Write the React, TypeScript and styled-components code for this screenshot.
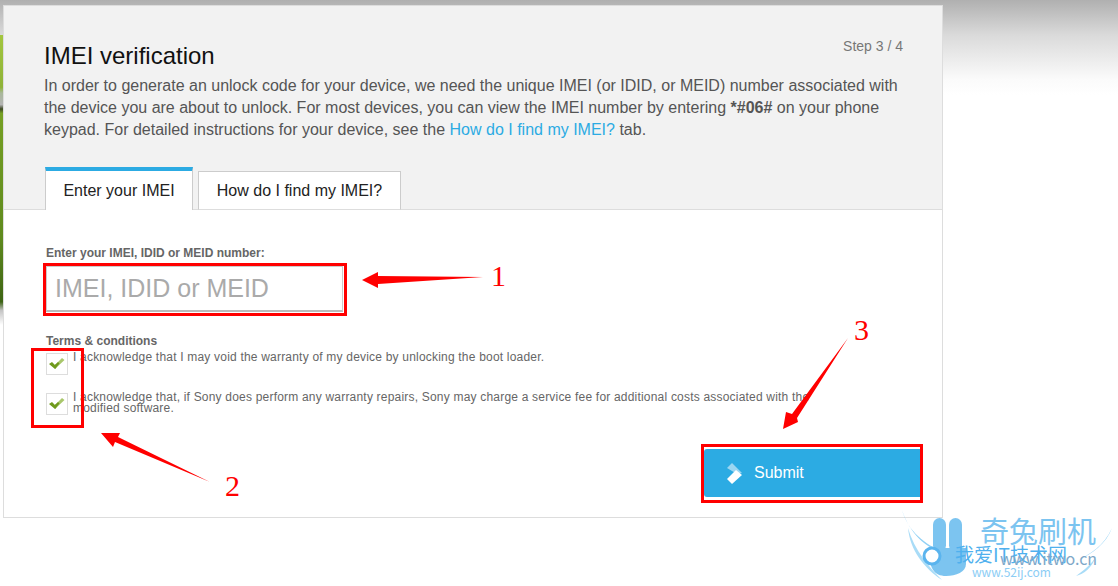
import styled, { createGlobalStyle } from "styled-components";

const GlobalStyle = createGlobalStyle`
  html, body {
    margin: 0;
    padding: 0;
    background: #fff;
    overflow: hidden;
  }
  * {
    box-sizing: border-box;
  }
`;

const Page = styled.div`
  position: relative;
  width: 1118px;
  height: 586px;
  padding: 5px 0 0 3px;
  font-family: "Liberation Sans", Arial, sans-serif;
  background:
    linear-gradient(
        180deg,
        #a3c63f 0,
        #8fb338 18%,
        #a9b89a 20%,
        #b4b4b4 24%,
        #3f4a25 25.5%,
        #76a024 27%,
        #5f8a1e 70%,
        #3d6414 92%,
        #c4c4c4 95%,
        #ffffff 100%
      )
      0 35px / 3px 290px no-repeat,
    linear-gradient(180deg, #b0b0b0 0, #dadada 35px, #fbfbfb 80px, #fff 95px) 0 0 / 100% 100px no-repeat;
`;

const Card = styled.div`
  width: 940px;
  border: 1px solid #ddd;
  background: #fff;
`;

const Header = styled.header`
  background: #f2f2f2;
  border-bottom: 1px solid #ddd;
  padding: 32px 39px 0 40px;
`;

const TitleRow = styled.div`
  display: flex;
  justify-content: space-between;
  align-items: flex-start;
`;

const Title = styled.h1`
  margin: 4px 0 0;
  font-size: 24px;
  line-height: 28px;
  font-weight: normal;
  color: #111;
`;

const Step = styled.span`
  font-size: 14px;
  line-height: 16px;
  color: #777;
`;

const Intro = styled.p`
  margin: 5px 0 0;
  font-size: 16px;
  line-height: 22px;
  color: #555;
`;

const Link = styled.a`
  color: #2cabe3;
`;

const Tabs = styled.div`
  display: flex;
  align-items: flex-end;
  gap: 5px;
  margin: 26px 0 -1px 1px;
`;

const Tab = styled.div<{ $active?: boolean }>`
  display: flex;
  align-items: center;
  justify-content: center;
  background: #fff;
  font-size: 16px;
  color: #222;
  border: 1px solid #ccc;
  border-bottom: ${(p) => (p.$active ? "none" : "1px solid #ddd")};
  border-top: ${(p) => (p.$active ? "4px solid #2cabe3" : "1px solid #ccc")};
  width: ${(p) => (p.$active ? "148px" : "203px")};
  height: ${(p) => (p.$active ? "43px" : "39px")};
  padding-top: ${(p) => (p.$active ? "1px" : "0")};
`;

const Form = styled.form`
  padding: 36px 22px 20px 42px;
`;

const FieldLabel = styled.label`
  display: block;
  font-size: 12px;
  line-height: 14px;
  font-weight: bold;
  color: #666;
`;

const ImeiInput = styled.input`
  display: block;
  width: 297px;
  height: 46px;
  margin-top: 6px;
  padding: 0 8px;
  border: 1px solid #ccc;
  border-bottom: 2px solid #bbb;
  background: #fff;
  font-family: inherit;
  font-size: 25px;
  color: #555;

  &::placeholder {
    color: #aaa;
    opacity: 1;
  }
`;

const TermsLabel = styled(FieldLabel)`
  margin-top: 22px;
`;

const Term = styled.div<{ $gap: number }>`
  display: flex;
  gap: 5px;
  margin-top: ${(p) => p.$gap}px;
`;

const CheckBox = styled.span`
  display: flex;
  flex: none;
  align-items: center;
  justify-content: center;
  width: 22px;
  height: 22px;
  margin-top: 1px;
  border: 1px solid #ddd;
  background: #fff;
`;

const TermText = styled.span`
  width: 752px;
  font-size: 12px;
  line-height: 11px;
  letter-spacing: 0.2px;
  color: #666;
`;

const Actions = styled.div`
  display: flex;
  justify-content: flex-end;
  margin-top: 34px;
`;

const SubmitButton = styled.button`
  display: flex;
  align-items: center;
  gap: 12px;
  width: 216px;
  height: 48px;
  padding: 0 0 0 23px;
  border: none;
  border-radius: 3px 0 0 3px;
  background: #2cabe3;
  color: #fff;
  font-family: inherit;
  font-size: 16px;
`;

const RedBox = styled.div<{ $x: number; $y: number; $w: number; $h: number }>`
  position: absolute;
  left: ${(p) => p.$x}px;
  top: ${(p) => p.$y}px;
  width: ${(p) => p.$w}px;
  height: ${(p) => p.$h}px;
  border: 3px solid #f00;
`;

const ArrowLayer = styled.svg`
  position: absolute;
  left: 0;
  top: 0;
  pointer-events: none;
`;

const Marker = styled.span<{ $x: number; $y: number }>`
  position: absolute;
  left: ${(p) => p.$x}px;
  top: ${(p) => p.$y}px;
  font-family: "Liberation Serif", serif;
  font-size: 30px;
  line-height: 30px;
  color: #f00;
`;

const Watermark = styled.div`
  position: absolute;
  left: 900px;
  top: 508px;
  width: 218px;
  height: 78px;
`;

const WatermarkArt = styled.svg`
  position: absolute;
  left: 0;
  top: 0;
`;

const WatermarkText = styled.span<{ $x: number; $y: number; $size: number; $color: string }>`
  position: absolute;
  left: ${(p) => p.$x}px;
  top: ${(p) => p.$y}px;
  font-family: "Noto Sans CJK SC", "Liberation Sans", sans-serif;
  font-size: ${(p) => p.$size}px;
  line-height: 1;
  color: ${(p) => p.$color};
  white-space: nowrap;
`;

function Check() {
  return (
    <svg width="16" height="12" viewBox="0 0 16 12">
      <polygon points="0,6 3,4 6,7 7.5,5.5 7.5,9 6,11" fill="#6f9a1c" />
      <polygon points="6,7 13,0 15.5,2 6,11" fill="#a9c76c" />
      <polygon points="6,7 9,4 10.5,5.5 6,11" fill="#6f9a1c" />
    </svg>
  );
}

function SubmitIcon() {
  return (
    <svg width="15" height="21" viewBox="0 0 15 21">
      <polygon points="0,5 5,0 15,10 10,11" fill="#9bd6f2" />
      <polygon points="0,16 9,7 15,12 5,21" fill="#fff" />
    </svg>
  );
}

export default function App() {
  return (
    <Page>
      <GlobalStyle />
      <Card>
        <Header>
          <TitleRow>
            <Title>IMEI verification</Title>
            <Step>Step 3 / 4</Step>
          </TitleRow>
          <Intro>
            In order to generate an unlock code for your device, we need the unique IMEI (or IDID, or MEID) number
            associated with the device you are about to unlock. For most devices, you can view the IMEI number by
            entering <b>*#06#</b> on your phone keypad. For detailed instructions for your device, see the{" "}
            <Link>How do I find my IMEI?</Link> tab.
          </Intro>
          <Tabs>
            <Tab $active>Enter your IMEI</Tab>
            <Tab>How do I find my IMEI?</Tab>
          </Tabs>
        </Header>
        <Form>
          <FieldLabel>Enter your IMEI, IDID or MEID number:</FieldLabel>
          <ImeiInput placeholder="IMEI, IDID or MEID" />
          <TermsLabel>Terms &amp; conditions</TermsLabel>
          <Term $gap={4}>
            <CheckBox>
              <Check />
            </CheckBox>
            <TermText>I acknowledge that I may void the warranty of my device by unlocking the boot loader.</TermText>
          </Term>
          <Term $gap={17}>
            <CheckBox>
              <Check />
            </CheckBox>
            <TermText>
              I acknowledge that, if Sony does perform any warranty repairs, Sony may charge a service fee for
              additional costs associated with the modified software.
            </TermText>
          </Term>
          <Actions>
            <SubmitButton type="button">
              <SubmitIcon />
              Submit
            </SubmitButton>
          </Actions>
        </Form>
      </Card>

      <RedBox $x={43} $y={263} $w={304} $h={53} />
      <RedBox $x={31} $y={348} $w={53} $h={80} />
      <RedBox $x={701} $y={444} $w={222} $h={59} />

      <ArrowLayer width="1118" height="586" viewBox="0 0 1118 586">
        <polygon points="362,280 378,272 378,276 483,277 378,284 378,288" fill="#f00" />
        <polygon points="101,433 120,433 118,437 210,482 115,442 113,447" fill="#f00" />
        <polygon points="783,429 786,412 792,414 848,338 797,418 798,422" fill="#f00" />
      </ArrowLayer>
      <Marker $x={491} $y={261}>1</Marker>
      <Marker $x={225} $y={471}>2</Marker>
      <Marker $x={854} $y={315}>3</Marker>

      <Watermark>
        <WatermarkArt width="218" height="78" viewBox="0 0 218 78">
          <path d="M2 2 C8 24 26 36 42 44 C26 40 10 26 2 2Z" fill="#8fd0f5" />
          <path d="M8 20 C14 42 30 60 42 72 C24 60 10 42 8 20Z" fill="#a9dcf7" />
          <path d="M212 20 C204 38 190 46 178 52 C192 46 206 36 212 20Z" fill="#8fd0f5" />
          <path d="M196 48 C192 60 184 66 176 68 C184 62 192 56 196 48Z" fill="#a9dcf7" />
          <rect x="33" y="10" width="13" height="34" rx="6.5" fill="#7cc4f0" />
          <rect x="49" y="10" width="13" height="34" rx="6.5" fill="#7cc4f0" />
          <path d="M30 40 H66 V56 C66 64 56 68 46 68 C34 68 28 60 30 40Z" fill="#7cc4f0" />
          <circle cx="32" cy="48" r="8" fill="#fff" stroke="#5ab4ee" strokeWidth="3" />
        </WatermarkArt>
        <WatermarkText $x={80} $y={8} $size={29} $color="#7cc4f0">奇兔刷机</WatermarkText>
        <WatermarkText $x={55} $y={36} $size={19} $color="#4fb0ee">我爱IT技术网</WatermarkText>
        <WatermarkText $x={100} $y={42} $size={16} $color="#7fa8c8">www.itwo.cn</WatermarkText>
        <WatermarkText $x={72} $y={58} $size={12} $color="#8ccdf5">www.52ij.com</WatermarkText>
      </Watermark>
    </Page>
  );
}
